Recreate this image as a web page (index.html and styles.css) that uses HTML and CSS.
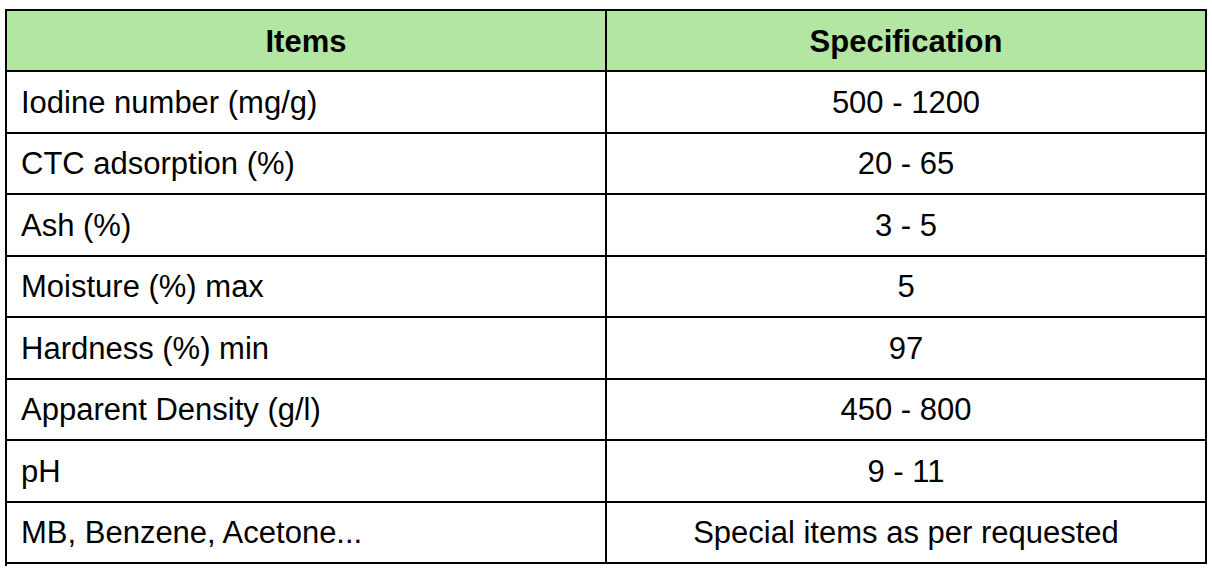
FILE: index.html
```html
<!DOCTYPE html>
<html>
<head>
<meta charset="utf-8">
<link rel="stylesheet" href="styles.css">
</head>
<body>
<table class="spec">
  <thead>
    <tr><th class="c1">Items</th><th class="c2">Specification</th></tr>
  </thead>
  <tbody>
    <tr><td class="name">Iodine number (mg/g)</td><td class="val">500 - 1200</td></tr>
    <tr><td class="name">CTC adsorption (%)</td><td class="val">20 - 65</td></tr>
    <tr><td class="name">Ash (%)</td><td class="val">3 - 5</td></tr>
    <tr><td class="name">Moisture (%) max</td><td class="val">5</td></tr>
    <tr><td class="name">Hardness (%) min</td><td class="val">97</td></tr>
    <tr><td class="name">Apparent Density (g/l)</td><td class="val">450 - 800</td></tr>
    <tr><td class="name">pH</td><td class="val">9 - 11</td></tr>
    <tr><td class="name">MB, Benzene, Acetone...</td><td class="val">Special items as per requested</td></tr>
    <tr class="tail"><td class="tailcell" colspan="2"></td></tr>
  </tbody>
</table>
</body>
</html>
```

FILE: styles.css
```css
html, body {
  margin: 0;
  padding: 0;
  background: #ffffff;
}
body {
  padding: 9px 0 0 5px;
  font-family: "Liberation Sans", Arial, sans-serif;
  color: #000;
  overflow: hidden;
  height: 568px;
  box-sizing: border-box;
}
.spec {
  border-collapse: collapse;
  width: 1202px;
  table-layout: fixed;
}
.spec th, .spec td {
  border: 2px solid #000;
  padding: 2px 0 0 0;
  font-size: 31px;
  vertical-align: middle;
}
.spec th {
  background: #b3e5a3;
  font-weight: bold;
  text-align: center;
  height: 57px;
}
.spec .c1 { width: 598px; }
.spec td {
  height: 57.5px;
}
.spec .name {
  text-align: left;
  padding-left: 14px;
}
.spec .val {
  text-align: center;
}
.spec .tailcell {
  border-right: none;
  border-bottom: none;
  padding: 0;
  height: 2px;
}
```
